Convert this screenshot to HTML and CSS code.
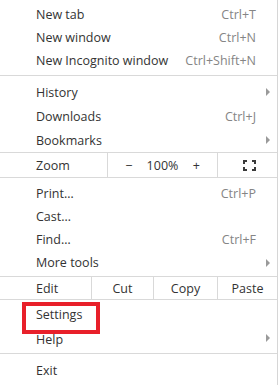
FILE: index.html
```html
<!DOCTYPE html>
<html lang="en">
<head>
  <meta charset="UTF-8" />
  <title>Browser menu</title>
  <link rel="stylesheet" href="styles.css">
</head>
<body>
  <div class="menu">
    <div class="group">
      <div class="item"><span>New tab</span><span class="key">Ctrl+T</span></div>
      <div class="item"><span>New window</span><span class="key">Ctrl+N</span></div>
      <div class="item"><span>New Incognito window</span><span class="key">Ctrl+Shift+N</span></div>
    </div>
    <div class="sep"></div>
    <div class="group tall">
      <div class="item"><span>History</span><span class="arrow"></span></div>
      <div class="item"><span>Downloads</span><span class="key">Ctrl+J</span></div>
      <div class="item"><span>Bookmarks</span><span class="arrow"></span></div>
    </div>

    <div class="strip zoom">
      <div class="cell label">Zoom</div>
      <div class="cell zoom-ctl">
        <span>&minus;</span>
        <span>100%</span>
        <span>+</span>
      </div>
      <div class="cell full">
        <svg width="13" height="11" viewBox="0 0 13 11">
          <path d="M0 0h4v2H2v2H0zM9 0h4v4h-2V2H9zM0 7h2v2h2v2H0zM11 7h2v4H9V9h2z" fill="#3a3a3a"/>
        </svg>
      </div>
    </div>

    <div class="group">
      <div class="item"><span>Print…</span><span class="key">Ctrl+P</span></div>
      <div class="item"><span>Cast…</span></div>
      <div class="item"><span>Find…</span><span class="key">Ctrl+F</span></div>
      <div class="item"><span>More tools</span><span class="arrow"></span></div>
    </div>

    <div class="strip edit">
      <div class="cell label">Edit</div>
      <div class="cell">Cut</div>
      <div class="cell">Copy</div>
      <div class="cell">Paste</div>
    </div>

    <div class="group">
      <div class="item marked"><span>Settings</span></div>
      <div class="item help"><span>Help</span><span class="arrow"></span></div>
    </div>
    <div class="sep last"></div>
    <div class="group">
      <div class="item"><span>Exit</span></div>
    </div>
  </div>
</body>
</html>
```

FILE: styles.css
```css
* { box-sizing: border-box; }

body {
  margin: 0;
  background: #fff;
  font-family: 'Open Sans', sans-serif;
  font-size: 12.5px;
  color: #333;
}

.menu {
  width: 278px;
  height: 385px;
  border-right: 1px solid #d6d6d6;
  padding-top: 3px;
}

.item {
  display: flex;
  align-items: center;
  justify-content: space-between;
  height: 23px;
  padding: 0 21px 0 36px;
  position: relative;
}

.tall .item {
  height: 24px;
}

.key {
  color: #858585;
}

.arrow {
  position: absolute;
  right: 7px;
  top: 50%;
  margin-top: -4px;
  width: 0;
  height: 0;
  border-top: 4px solid transparent;
  border-bottom: 4px solid transparent;
  border-left: 4px solid #9a9a9a;
}

/* red highlight box around Settings */
.marked {
  z-index: 1;
}

.marked::after {
  content: "";
  position: absolute;
  left: 22px;
  top: -1px;
  width: 70px;
  height: 24px;
  border: 4px solid #e8202a;
}

.help {
  padding-top: 3px;
}

.sep {
  height: 1px;
  background: #d9d9d9;
  margin: 3px 0 4px;
}

.sep.last {
  margin: 4px 0 5px;
}

.strip {
  display: flex;
  border-top: 1px solid #d9d9d9;
  border-bottom: 1px solid #d9d9d9;
}

.strip .cell {
  display: flex;
  align-items: center;
  justify-content: center;
  border-left: 1px solid #d9d9d9;
}

.strip .label {
  justify-content: flex-start;
  padding-left: 36px;
  border-left: none;
}

.zoom {
  height: 26px;
  margin-bottom: 4px;
}

.zoom .label { width: 107px; }
.zoom .zoom-ctl { width: 110px; justify-content: space-around; padding: 0 10px; }
.zoom .full { flex: 1; padding-left: 3px; }

.edit {
  height: 24px;
  margin: 2px 0 3px;
}

.edit .label { width: 91px; }
.edit .cell:nth-child(2) { width: 62px; }
.edit .cell:nth-child(3) { width: 64px; }
.edit .cell:nth-child(4) { flex: 1; }
```
